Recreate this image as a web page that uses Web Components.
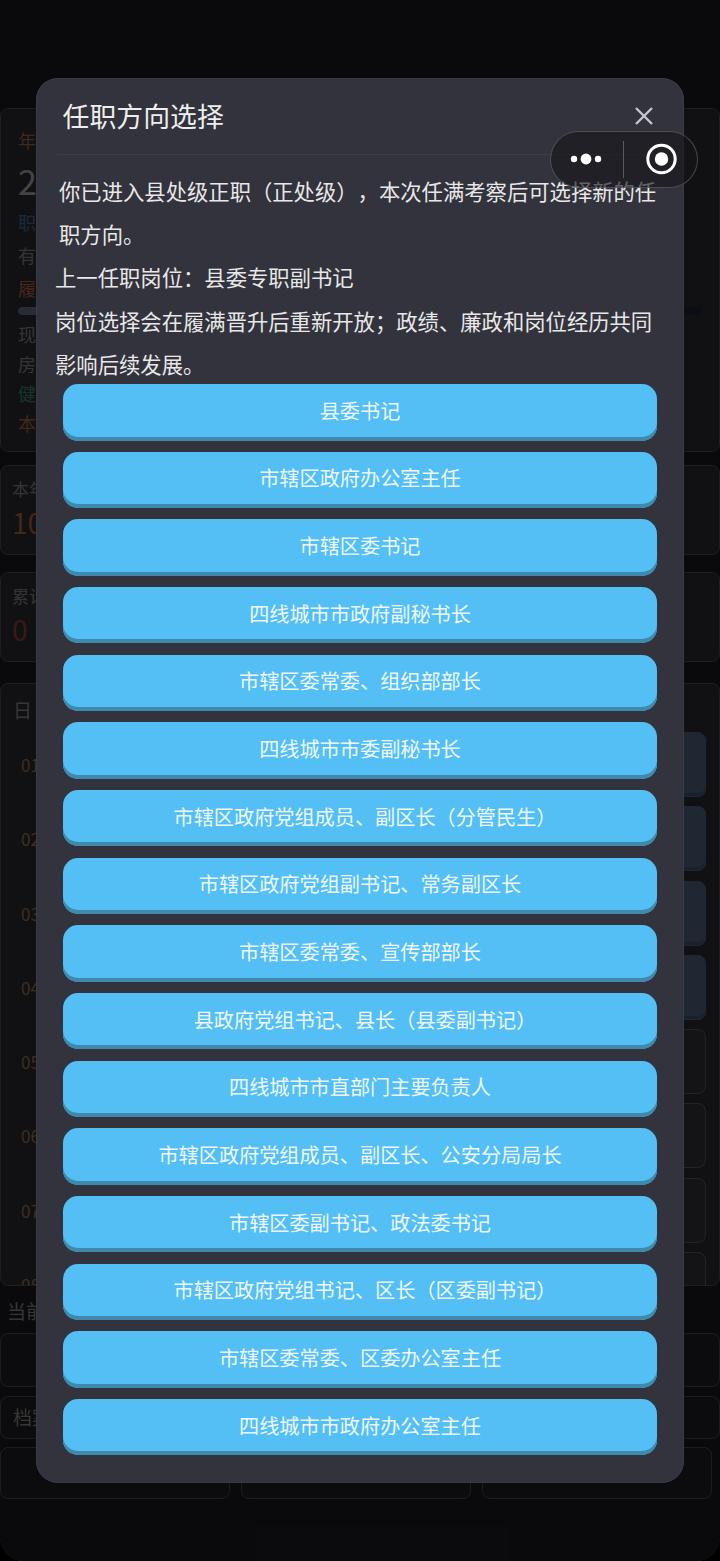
<!DOCTYPE html>
<html lang="zh">
<head>
<meta charset="utf-8">
<style>
html, body { margin: 0; padding: 0; background: #000; }
body { width: 720px; height: 1561px; overflow: hidden; font-family: "Noto Sans CJK SC", "Noto Sans", sans-serif; }
</style>
</head>
<body>
<game-page>
  <info-card slot="top">
    <stat-line color="#a86c42" size="18px" height="32px">年</stat-line>
    <stat-line color="#b4b4b4" size="34px" height="50px">2</stat-line>
    <stat-line color="#466f9a" size="18px" height="33px">职</stat-line>
    <stat-line color="#8a8a8a" size="18px" height="33px">有</stat-line>
    <stat-line color="#b5683a" size="18px" height="33px">履</stat-line>
    <progress-bar></progress-bar>
    <stat-line color="#8a8a8a" size="18px" height="29.6px">现</stat-line>
    <stat-line color="#8a8a8a" size="18px" height="29.6px">房</stat-line>
    <stat-line color="#358f6e" size="18px" height="29.6px">健</stat-line>
    <stat-line color="#b5683a" size="18px" height="29.6px">本</stat-line>
  </info-card>
</game-page>
<script>
// shared helper for a shadow root from markup
function mount(el, html) {
  el.attachShadow({ mode: 'open' }).innerHTML = html;
}

class StatLine extends HTMLElement {
  connectedCallback() {
    const color = this.getAttribute('color') || '#999';
    const size = this.getAttribute('size') || '17px';
    const height = this.getAttribute('height') || '29px';
    mount(this, `<style>
      :host { display: block; height: ${height}; line-height: ${height}; padding-left: 17px; color: ${color}; font-size: ${size}; }
    </style><slot></slot>`);
  }
}
customElements.define('stat-line', StatLine);

class ProgressBar extends HTMLElement {
  connectedCallback() {
    mount(this, `<style>
      :host { display: block; height: 8px; margin: 2px 17px 5px 17px; border-radius: 4px; background: #20253a; overflow: hidden; }
      div { width: 50%; height: 100%; border-radius: 4px; background: #6a7390; }
    </style><div></div>`);
  }
}
customElements.define('progress-bar', ProgressBar);

class InfoCard extends HTMLElement {
  connectedCallback() {
    mount(this, `<style>
      :host { display: block; box-sizing: border-box; height: 344px; margin-top: 108px; border: 1px solid #52525a; border-radius: 8px; padding: 15px 0 0; background: #2d2d35; }
    </style><slot></slot>`);
  }
}
customElements.define('info-card', InfoCard);

class GamePage extends HTMLElement {
  connectedCallback() {
    const days = ['01','02','03','04','05','06','07','08'];
    const tiles = days.map((d, i) => `<div class="row"><span class="day">${d}</span><div class="tile ${i < 4 ? 'on' : ''}"></div></div>`).join('');
    mount(this, `<style>
      :host { display: block; position: relative; width: 720px; height: 1561px; overflow: hidden; background: #1c1c22; border-radius: 0 0 24px 24px; font-size: 17px; }
      .stack { display: flex; flex-direction: column; }
      .small { box-sizing: border-box; height: 90px; border: 1px solid #52525a; border-radius: 8px; background: #2d2d35; padding: 10px 0 0 11px; color: #8a8a8a; }
      .small b { display: block; font-weight: 400; font-size: 28px; line-height: 42px; }
      .schedule { box-sizing: border-box; height: 603px; margin-top: 21px; border: 1px solid #52525a; border-radius: 8px; background: #2d2d35; overflow: hidden; }
      .schedule h3 { margin: 0; font-weight: 400; font-size: 19px; line-height: 26px; color: #8f8f8f; padding: 13px 0 0 12px; height: 35px; }
      .row { display: flex; align-items: flex-start; height: 74.3px; padding-left: 20px; }
      .day { color: #a37a52; font-size: 17px; line-height: 65px; flex: 1; }
      .tile { box-sizing: border-box; width: 120px; height: 65px; margin-right: 13px; border-radius: 8px; border: 1px solid #5f5f69; background: #35353c; }
      .tile.on { background: #526786; border-color: #526786; box-shadow: inset 0 -3px 0 #46587a; }
      .dock { position: absolute; left: 0; right: 0; top: 1286px; bottom: 0; background: #1c1c22; color: #8f8f8f; }
      .dock p { margin: 0; font-size: 19px; line-height: 26px; padding: 12px 0 9px 7px; }
      .box { box-sizing: border-box; border: 1px solid #4e4e56; border-radius: 8px; background: #202026; }
      .act { display: grid; grid-template-columns: repeat(3, 230px); gap: 11px; margin-top: 7.5px; }
      .act .box { height: 52px; }
      .dim { position: absolute; inset: 0; background: rgba(0,0,0,.62); pointer-events: none; }
    </style>
    <div class="stack">
      <slot name="top"></slot>
      <div class="small" style="margin-top:13px">本年<b style="color:#b5683a">10</b></div>
      <div class="small" style="margin-top:17px">累计<b style="color:#99423a">0</b></div>
      <div class="schedule"><h3>日</h3>${tiles}</div>
    </div>
    <div class="dock">
      <p>当前</p>
      <div class="box" style="height:54px"></div>
      <div class="box" style="height:43px;margin-top:9px;padding:6px 0 0 12px;font-size:19px">档案</div>
      <div class="act"><div class="box"></div><div class="box"></div><div class="box"></div></div>
    </div>
    <div class="dim"></div>
    <post-picker></post-picker>
    <wx-capsule></wx-capsule>`);
  }
}
customElements.define('game-page', GamePage);

class WxCapsule extends HTMLElement {
  connectedCallback() {
    mount(this, `<style>
      :host { position: absolute; left: 550px; top: 130.5px; width: 148px; height: 57.5px; box-sizing: border-box; display: flex; align-items: center; border: 1.5px solid rgba(120,120,126,.5); border-radius: 29px; background: rgba(22,22,26,.64); }
      svg { display: block; }
    </style>
    <svg width="145" height="54" viewBox="0 0 145 54">
      <circle cx="23" cy="27" r="3.2" fill="#fff"/><circle cx="35" cy="27" r="5.4" fill="#fff"/><circle cx="47" cy="27" r="3.2" fill="#fff"/>
      <rect x="72" y="9" width="1" height="37" fill="#5a5a5f"/>
      <circle cx="110.5" cy="27" r="13.7" fill="none" stroke="#fff" stroke-width="3"/><circle cx="110.5" cy="27" r="6.7" fill="#fff"/>
    </svg>`);
  }
}
customElements.define('wx-capsule', WxCapsule);

class PickButton extends HTMLElement {
  connectedCallback() {
    mount(this, `<style>
      :host { display: flex; align-items: center; justify-content: center; box-sizing: border-box; height: 56.5px; padding-bottom: 4px; border-radius: 15px; background: #54bff5; box-shadow: inset 0 -4px 0 #3f89ad; color: #eef8fe; font-size: 20.16px; }
      /* a closing bracket at the end of a label counts half its width when centred */
      :host([trim]) { padding-left: 10px; }
    </style><slot></slot>`);
  }
}
customElements.define('pick-button', PickButton);

class PostPicker extends HTMLElement {
  connectedCallback() {
    const posts = ['县委书记','市辖区政府办公室主任','市辖区委书记','四线城市市政府副秘书长','市辖区委常委、组织部部长','四线城市市委副秘书长','市辖区政府党组成员、副区长（分管民生）','市辖区政府党组副书记、常务副区长','市辖区委常委、宣传部部长','县政府党组书记、县长（县委副书记）','四线城市市直部门主要负责人','市辖区政府党组成员、副区长、公安分局局长','市辖区委副书记、政法委书记','市辖区政府党组书记、区长（区委副书记）','市辖区委常委、区委办公室主任','四线城市市政府办公室主任'];
    mount(this, `<style>
      :host { position: absolute; left: 36px; top: 78px; width: 648px; height: 1405px; box-sizing: border-box; border-radius: 22px; background: #32333c; box-shadow: inset 0 0 0 1px #383a45; padding: 0 27px; color: #e8e8e8; text-spacing-trim: space-all; }
      header { display: flex; justify-content: space-between; align-items: center; height: 77px; margin: 0 -6px; padding: 0 6px; border-bottom: 1px solid #3c3e47; box-sizing: border-box; }
      h2 { margin: 0 0 0 -.5px; font-weight: 400; font-size: 26.88px; line-height: 78px; color: #eeeeee; }
      svg { display: block; margin-right: 3.5px; }
      .text { font-size: 21.33px; line-height: 43.2px; padding-top: 14px; height: 229px; box-sizing: border-box; }
      .text p { margin: 0 0 0 -8px; width: 600px; }
      .text p.lead { margin-left: -4px; width: 600px; }
      .list { display: flex; flex-direction: column; gap: 11.17px; }
    </style>
    <header><h2>任职方向选择</h2>
      <svg width="20" height="20" viewBox="0 0 20 20"><path d="M2 2 L18 18 M18 2 L2 18" stroke="#c6c7ce" stroke-width="2.4" fill="none"/></svg>
    </header>
    <div class="text">
      <p class="lead">你已进入县处级正职（正处级），本次任满考察后可选择新的任职方向。</p>
      <p>上一任职岗位：县委专职副书记</p>
      <p>岗位选择会在履满晋升后重新开放；政绩、廉政和岗位经历共同影响后续发展。</p>
    </div>
    <div class="list">${posts.map(p => `<pick-button${p.endsWith('）') ? ' trim' : ''}>${p}</pick-button>`).join('')}</div>`);
  }
}
customElements.define('post-picker', PostPicker);
</script>
</body>
</html>
